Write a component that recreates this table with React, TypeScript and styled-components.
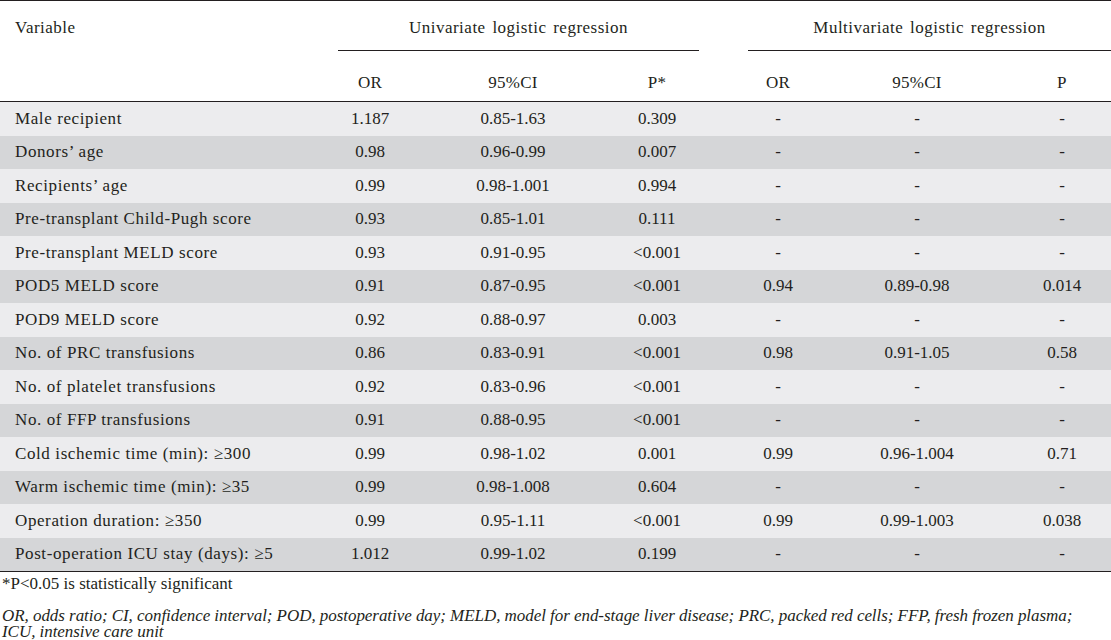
import React from 'react';
import styled, { createGlobalStyle } from 'styled-components';

const Global = createGlobalStyle`
  html, body { margin: 0; padding: 0; background: #ffffff; }
  body {
    font-family: "Liberation Serif", "Times New Roman", serif;
    color: #231f20;
  }
`;

const COLS = '338px 64px 222px 75px 49px 60px 218px 85px';
const INK = '#231f20';

const Page = styled.div`
  width: 1111px;
  display: flex;
  flex-direction: column;
`;

const Table = styled.div`
  width: 1111px;
  border-top: 1.5px solid ${INK};
  border-bottom: 1.5px solid ${INK};
  font-size: 17px;
`;

const HeadTop = styled.div`
  display: grid;
  grid-template-columns: 338px 361px 49px 363px;
  height: 50px;
`;

const HeadSub = styled.div`
  display: grid;
  grid-template-columns: ${COLS};
  height: 50px;
  border-bottom: 1.5px solid ${INK};
  align-items: center;
`;

const VarHead = styled.div`
  padding: 17px 0 0 15px;
  letter-spacing: 0.5px;
`;

const GroupHead = styled.div<{ $col: number }>`
  grid-column: ${(p) => p.$col};
  border-bottom: 1.5px solid ${INK};
  text-align: center;
  padding-top: 17px;
  word-spacing: 2px;
  letter-spacing: 0.5px;
`;

const Cell = styled.div<{ $pr?: number; $left?: boolean }>`
  text-align: ${(p) => (p.$left ? 'left' : 'center')};
  padding-left: ${(p) => (p.$left ? '15px' : '0')};
  padding-right: ${(p) => p.$pr ?? 0}px;
  white-space: nowrap;
`;

const SubCell = styled(Cell)`
  padding-top: 14px;
  letter-spacing: 0.3px;
`;

const Row = styled.div<{ $dark: boolean }>`
  display: grid;
  grid-template-columns: ${COLS};
  height: 33.5px;
  align-items: center;
  background: ${(p) => (p.$dark ? '#d5d6d8' : '#ececee')};
`;

const Label = styled(Cell)`
  letter-spacing: 0.6px;
`;

const Footnote = styled.div`
  font-size: 17px;
  padding: 2px 0 0 2px;
  line-height: 20px;
`;

const Notes = styled.div`
  font-size: 17px;
  font-style: italic;
  padding: 14px 0 0 2px;
  line-height: 16px;
  white-space: nowrap;
  letter-spacing: -0.05px;
`;

type R = [string, string, string, string, string, string, string];

const rows: R[] = [
  ['Male recipient', '1.187', '0.85-1.63', '0.309', '-', '-', '-'],
  ['Donors’ age', '0.98', '0.96-0.99', '0.007', '-', '-', '-'],
  ['Recipients’ age', '0.99', '0.98-1.001', '0.994', '-', '-', '-'],
  ['Pre-transplant Child-Pugh score', '0.93', '0.85-1.01', '0.111', '-', '-', '-'],
  ['Pre-transplant MELD score', '0.93', '0.91-0.95', '<0.001', '-', '-', '-'],
  ['POD5 MELD score', '0.91', '0.87-0.95', '<0.001', '0.94', '0.89-0.98', '0.014'],
  ['POD9 MELD score', '0.92', '0.88-0.97', '0.003', '-', '-', '-'],
  ['No. of PRC transfusions', '0.86', '0.83-0.91', '<0.001', '0.98', '0.91-1.05', '0.58'],
  ['No. of platelet transfusions', '0.92', '0.83-0.96', '<0.001', '-', '-', '-'],
  ['No. of FFP transfusions', '0.91', '0.88-0.95', '<0.001', '-', '-', '-'],
  ['Cold ischemic time (min): ≥300', '0.99', '0.98-1.02', '0.001', '0.99', '0.96-1.004', '0.71'],
  ['Warm ischemic time (min): ≥35', '0.99', '0.98-1.008', '0.604', '-', '-', '-'],
  ['Operation duration: ≥350', '0.99', '0.95-1.11', '<0.001', '0.99', '0.99-1.003', '0.038'],
  ['Post-operation ICU stay (days): ≥5', '1.012', '0.99-1.02', '0.199', '-', '-', '-'],
];

export default function App() {
  return (
    <Page>
      <Global />
      <Table>
        <HeadTop>
          <VarHead>Variable</VarHead>
          <GroupHead $col={2}>Univariate logistic regression</GroupHead>
          <GroupHead $col={4}>Multivariate logistic regression</GroupHead>
        </HeadTop>
        <HeadSub>
          <span />
          <SubCell>OR</SubCell>
          <SubCell>95%CI</SubCell>
          <SubCell $pr={9}>P*</SubCell>
          <span />
          <SubCell>OR</SubCell>
          <SubCell>95%CI</SubCell>
          <SubCell $pr={13}>P</SubCell>
        </HeadSub>
        {rows.map((r, i) => (
          <Row key={r[0]} $dark={i % 2 === 1}>
            <Label $left>{r[0]}</Label>
            <Cell>{r[1]}</Cell>
            <Cell>{r[2]}</Cell>
            <Cell $pr={9}>{r[3]}</Cell>
            <span />
            <Cell>{r[4]}</Cell>
            <Cell>{r[5]}</Cell>
            <Cell $pr={13}>{r[6]}</Cell>
          </Row>
        ))}
      </Table>
      <Footnote>*P&lt;0.05 is statistically significant</Footnote>
      <Notes>
        OR, odds ratio; CI, confidence interval; POD, postoperative day; MELD, model for end-stage liver disease; PRC, packed red cells; FFP, fresh frozen plasma;
        <br />
        ICU, intensive care unit
      </Notes>
    </Page>
  );
}
